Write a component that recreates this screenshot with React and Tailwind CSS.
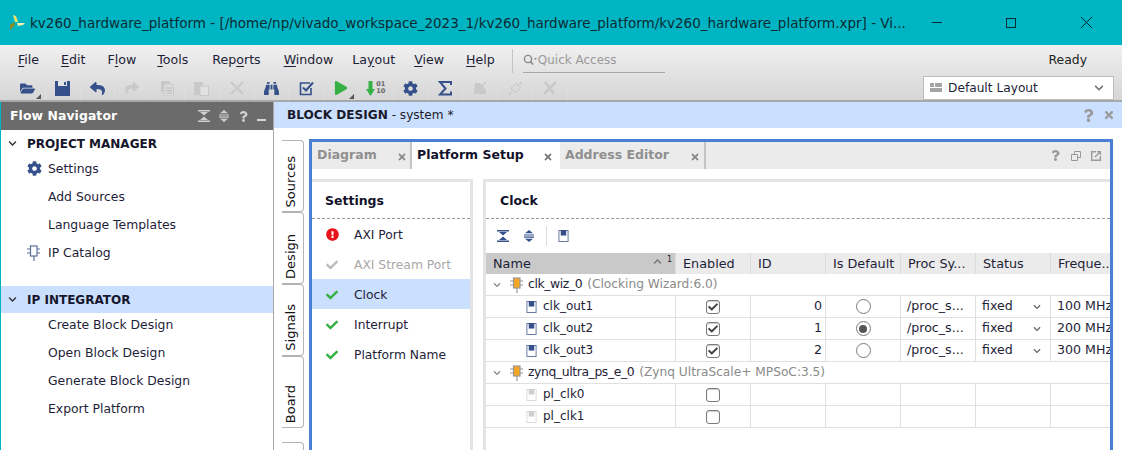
import React from 'react';
import { FaCog, FaCheck, FaExclamationCircle, FaPlay, FaBinoculars, FaFolderOpen, FaReply, FaShare, FaChevronDown, FaTimes, FaQuestion } from 'react-icons/fa';

const NAVY = '#35508a';
const OFF = '#c9c9c9';

function Mn({ pre = '', u, post = '', className = '' }) {
    return <span className={`whitespace-pre ${className}`}>{pre}<span className="underline underline-offset-2">{u}</span>{post}</span>;
}

function Chip({ color = '#5c6f99', core = 'none', className = '' }) {
    return (
        <svg viewBox="0 0 14 16" className={`w-[14px] h-4 ${className}`}>
            <path d="M0 4h13M0 8h13M7 11v5" stroke={color} strokeWidth="1.2" fill="none" />
            <rect x="3.5" y="1" width="6.5" height="10" fill={core === 'none' ? '#fff' : core} stroke={color} strokeWidth="1.2" />
        </svg>
    );
}

function Port({ off }) {
    const c = off ? '#cfcfcf' : NAVY;
    return (
        <svg viewBox="0 0 12 14" className="w-[11px] h-[14px] shrink-0">
            <rect x="1" y="1" width="10" height="12" fill="#fff" stroke={off ? '#d8d8d8' : '#5c6f99'} strokeWidth="1" />
            <rect x="3" y="0.5" width="6" height="6" fill={c} />
        </svg>
    );
}

function CollapseIcon() {
    return (
        <svg viewBox="0 0 12 12" className="w-3 h-3" fill="currentColor">
            <path d="M0 0h12v1.5H0zM0 10.5h12V12H0zM2 2h8L6 5.5zM6 6.5 10 10H2z" />
        </svg>
    );
}

function ExpandIcon() {
    return (
        <svg viewBox="0 0 12 12" className="w-3 h-3" fill="currentColor">
            <path d="M6 0l4 3.2H2zM6 12l-4-3.2h8zM1 4.4h10v1.2H1zM1 6.6h10v1.2H1z" />
        </svg>
    );
}

function ToolCell({ children }) {
    return <div className="w-[34.8px] h-[24px] flex items-center justify-center border-r border-[#dedede] relative">{children}</div>;
}

function Corner() {
    return <span className="absolute right-[4px] bottom-[1px] w-0 h-0 border-l-[5px] border-l-transparent border-b-[5px] border-b-[#555]" />;
}

function Toolbar() {
    return (
        <div className="flex items-center pl-[11px] pt-[1px]">
            <ToolCell><FaFolderOpen size={15} color={NAVY} /><Corner /></ToolCell>
            <ToolCell>
                <svg viewBox="0 0 15 15" className="w-[15px] h-[15px]"><path d="M0 0h15v15H0z" fill={NAVY} /><path d="M3 0h9v5H3z" fill="#e4e4e4" /><path d="M9 1h2v3H9z" fill={NAVY} /></svg>
            </ToolCell>
            <ToolCell><FaReply size={15} color={NAVY} /></ToolCell>
            <ToolCell><FaShare size={14} color={OFF} /></ToolCell>
            <ToolCell>
                <svg viewBox="0 0 13 15" className="w-[13px] h-[15px]"><path d="M0 0h9v11H0z" fill={OFF} /><path d="M3 3h9.5v12H3z" fill="#dcdcdc" stroke={OFF} /><path d="M5 7h6M5 9.5h6M5 12h6" stroke="#bbb" /></svg>
            </ToolCell>
            <ToolCell>
                <svg viewBox="0 0 15 15" className="w-[15px] h-[15px]"><path d="M0 1h9v13H0z" fill={OFF} /><path d="M6 5h8.5v9.5H6z" fill="#e2e2e2" stroke={OFF} /></svg>
            </ToolCell>
            <ToolCell>
                <svg viewBox="0 0 14 14" className="w-[14px] h-[14px]"><path d="M1 1l12 12M13 1 1 13" stroke={OFF} strokeWidth="2.2" /></svg>
            </ToolCell>
            <ToolCell><FaBinoculars size={15} color={NAVY} /></ToolCell>
            <ToolCell>
                <svg viewBox="0 0 15 15" className="w-[15px] h-[15px]" fill="none"><path d="M12 7v6.5H1.5V2H11" stroke={NAVY} strokeWidth="1.6" /><path d="M4 6.5 7 9.5 14 1.5" stroke={NAVY} strokeWidth="2" /></svg>
            </ToolCell>
            <ToolCell><FaPlay size={14} color="#35b044" /><Corner /></ToolCell>
            <ToolCell>
                <div className="flex items-start gap-[1px]">
                    <svg viewBox="0 0 9 15" className="w-[9px] h-[15px]"><path d="M2.5 0h4v8H9L4.5 15 0 8h2.5z" fill="#35b044" /></svg>
                    <span className="text-[6.5px] leading-[7px] font-bold text-[#666]">01<br />10</span>
                </div>
            </ToolCell>
            <ToolCell><FaCog size={15} color={NAVY} /></ToolCell>
            <ToolCell>
                <svg viewBox="0 0 14 15" className="w-[14px] h-[15px]" fill="none"><path d="M13 4V1H2l5.5 6.5L2 13.5h11v-3" stroke={NAVY} strokeWidth="2" /></svg>
            </ToolCell>
            <ToolCell>
                <svg viewBox="0 0 14 14" className="w-[14px] h-[14px]"><path d="M1 13h12V9L7 2 2 2z" fill={OFF} /><path d="M1 13 13 1" stroke={OFF} strokeWidth="1.5" /></svg>
            </ToolCell>
            <ToolCell>
                <svg viewBox="0 0 15 15" className="w-[15px] h-[15px]" fill="none" stroke={OFF}><path d="M3 7.5 8 2.5l4.5 4.5-5 5z" strokeWidth="1.6" strokeDasharray="2 1" /><path d="M1 14l3-3M11 4l3-3" strokeWidth="1.6" /></svg>
            </ToolCell>
            <div className="w-[34.8px] h-[24px] flex items-center justify-center border-r border-[#dedede]">
                <svg viewBox="0 0 14 14" className="w-[14px] h-[14px]"><path d="M1 13 13 1M2 1l9 12" stroke={OFF} strokeWidth="2.6" /></svg>
            </div>
        </div>
    );
}

function NavItem({ icon, className = '', children }) {
    return (
        <div className={`h-7 flex items-center relative pl-[47px] text-[12.4px] text-[#1e1e38] ${className}`}>
            {icon && <span className="absolute left-[26px] top-[6px]">{icon}</span>}
            {children}
        </div>
    );
}

function Navigator() {
    return (
        <div className="w-[274px] shrink-0 border-r border-[#a8a8a8] border-l border-l-[#00b5c3] bg-white flex flex-col">
            <div className="h-7 shrink-0 bg-[#6b6b6b] flex items-center justify-between pl-[9px] pr-[7px] text-white text-[12.4px] font-bold tracking-[0.1px]">
                <span>Flow Navigator</span>
                <div className="flex items-center gap-[8px] text-[#d0d0d0]">
                    <CollapseIcon />
                    <ExpandIcon />
                    <FaQuestion size={11} />
                    <span className="w-[9px] h-[2px] bg-[#d8d8d8] mt-2" />
                </div>
            </div>
            <div className="h-[25px] shrink-0 flex items-center gap-[10px] pl-[7px] pt-[2px] text-[12px] font-bold text-[#16162c]">
                <FaChevronDown size={9} color="#333" />
                <span>PROJECT MANAGER</span>
            </div>
            <NavItem icon={<FaCog size={15} color={NAVY} />}>Settings</NavItem>
            <NavItem>Add Sources</NavItem>
            <NavItem>Language Templates</NavItem>
            <NavItem icon={<Chip />}>IP Catalog</NavItem>
            <div className="h-[27px] shrink-0 mt-[19px] bg-[#cbdfff] flex items-center gap-[10px] pl-[7px] text-[12px] font-bold text-[#16162c]">
                <FaChevronDown size={9} color="#333" />
                <span>IP INTEGRATOR</span>
            </div>
            <NavItem className="-mt-[2px]">Create Block Design</NavItem>
            <NavItem>Open Block Design</NavItem>
            <NavItem>Generate Block Design</NavItem>
            <NavItem>Export Platform</NavItem>
        </div>
    );
}

function SideTab({ children }) {
    return (
        <div className="h-[72px] w-[22px] shrink-0 border border-l-0 border-[#b4b4b4] rounded-r-[4px] bg-white flex items-end justify-center pr-[3px] pb-[4px] text-[13px] text-[#111]">
            <span className="[writing-mode:vertical-rl] rotate-180">{children}</span>
        </div>
    );
}

function Tab({ active, children, w, pr }) {
    return (
        <div className={`h-[27px] flex items-center justify-between pl-[5px] text-[12.5px] font-bold ${active ? 'bg-white text-[#12122a]' : 'bg-[#ebebeb] text-[#8f8f8f] border-r-2 border-r-[#c4c4c4]'} ${w} ${pr}`}>
            <span>{children}</span>
            <FaTimes size={10} color={active ? '#777' : '#888'} className="mt-[2px]" />
        </div>
    );
}

function SetRow({ icon, active, off, children }) {
    return (
        <div className={`h-[30px] flex items-center pl-[14px] pt-[1px] text-[12.3px] ${active ? 'bg-[#cbdfff]' : ''} ${off ? 'text-[#a8a8a8]' : 'text-[#1e1e38]'}`}>
            <span className="w-[28px] flex">{icon}</span>
            <span className="mt-[1px]">{children}</span>
        </div>
    );
}

const gridCols = 'grid grid-cols-[190px_75px_75px_75px_75px_75px_60px]';
const cell = 'h-[22px] border-r border-b border-[#e0e0e0] flex items-center text-[12.6px] text-[#1e1e38] overflow-hidden whitespace-nowrap';

function Check({ on }) {
    return (
        <span className="w-[14px] h-[14px] rounded-[3px] border border-[#7a7a7a] bg-white flex items-center justify-center shadow-[inset_0_1px_1px_#ccc]">
            {on && <FaCheck size={10} color="#444" />}
        </span>
    );
}

function Radio({ on }) {
    return (
        <span className="w-[15px] h-[15px] rounded-full border border-[#7a7a7a] bg-white flex items-center justify-center">
            {on && <span className="w-2 h-2 rounded-full bg-[#555]" />}
        </span>
    );
}

function ClockRow({ name, id, def, freq }) {
    return (
        <div className={gridCols}>
            <div className={`${cell} pl-[40px] gap-[6px]`}><Port /><span className="text-[12px] -mt-[2px]">{name}</span></div>
            <div className={`${cell} justify-center`}><Check on /></div>
            <div className={`${cell} justify-end pr-[3px]`}>{id}</div>
            <div className={`${cell} justify-center`}><Radio on={def} /></div>
            <div className={`${cell} pl-[6px]`}>/proc_s...</div>
            <div className={`${cell} pl-[6px] justify-between pr-[9px]`}><span className="-mt-[1px]">fixed</span><FaChevronDown size={8} color="#666" /></div>
            <div className={`${cell} pl-[6px] border-r-0`}>{freq}</div>
        </div>
    );
}

function PlRow({ name }) {
    return (
        <div className={gridCols}>
            <div className={`${cell} pl-[40px] gap-[6px]`}><Port off /><span className="text-[12px] -mt-[2px]">{name}</span></div>
            <div className={`${cell} justify-center`}><Check /></div>
            <div className={cell} />
            <div className={cell} />
            <div className={cell} />
            <div className={cell} />
            <div className={`${cell} border-r-0`} />
        </div>
    );
}

function GroupRow({ name, desc }) {
    return (
        <div className="h-[22px] border-b border-[#e0e0e0] flex items-center pl-[7px] text-[12.4px] text-[#1e1e38] whitespace-nowrap">
            <FaChevronDown size={8} color="#888" />
            <Chip color="#999" core="#f5a623" className="ml-[9px] mr-[4px]" />
            <span className="tracking-[-0.4px]">{name}</span>
            <span className="text-[#8a8a8a] ml-[5px] text-[12.2px]">{desc}</span>
        </div>
    );
}

function Th({ children, className = 'bg-[#ebebeb]' }) {
    return <div className={`h-[21px] border-r border-[#dcdcdc] flex items-center pl-[7px] text-[12.8px] text-[#1e1e38] overflow-hidden whitespace-nowrap ${className}`}>{children}</div>;
}

export default function App() {
    return (
        <div className="w-[1122px] h-[450px] overflow-hidden bg-white font-['DejaVu_Sans',sans-serif] flex flex-col">
            <div className="h-[45px] shrink-0 bg-[#00b5c3] flex items-center pl-[9px] text-[#0c2b33] text-[13.5px] whitespace-nowrap">
                <svg viewBox="0 0 16 16" className="w-4 h-4 mr-[5px] mt-[1px]">
                    <path d="M4 0l3 1 2 6-3 0z" fill="#f3e36a" />
                    <path d="M8 8l8 0-2 2-5 1z" fill="#f7f0b0" />
                    <path d="M1 15l0-5 4-3 1 3z" fill="#8a8a20" />
                </svg>
                <span className="w-[856px] shrink-0 mt-[1px]">kv260_hardware_platform - [/home/np/vivado_workspace_2023_1/kv260_hardware_platform/kv260_hardware_platform.xpr] - Vi...</span>
                <div className="ml-auto flex items-center text-[#0c2b33]">
                    <span className="w-[10px] h-[1px] bg-[#0c2b33] mr-[64px]" />
                    <span className="w-[10px] h-[10px] border border-[#0c2b33] mr-[65px]" />
                    <svg viewBox="0 0 10 10" className="w-[11px] h-[11px] mr-[30px]"><path d="M0 0l10 10M10 0 0 10" stroke="#0c2b33" strokeWidth="0.9" /></svg>
                </div>
            </div>
            <div className="h-[57px] shrink-0 bg-gradient-to-b from-[#f0f0f0] to-[#d6d6d6] border-b-2 border-[#a8a8a8] relative flex flex-col">
                <div className="h-[30px] shrink-0 flex items-center pl-[18px] text-[12.6px] text-[#1e1e38]">
                    <div className="flex gap-[22px]">
                        <Mn u="F" post="ile" />
                        <Mn u="E" post="dit" />
                        <Mn pre="F" u="l" post="ow" />
                        <Mn u="T" post="ools" className="-ml-[1px]" />
                        <Mn pre="Rep" u="o" post="rts" className="ml-[2px]" />
                        <Mn u="W" post="indow" className="ml-[1px]" />
                        <Mn pre="La" u="y" post="out" className="-ml-[3px]" />
                        <Mn u="V" post="iew" className="-ml-[3px]" />
                        <Mn u="H" post="elp" />
                    </div>
                    <span className="w-[1px] h-6 bg-[#c4c4c4] ml-[17px] mt-[2px]" />
                    <div className="ml-[10px] w-[142px] h-[24px] border-b border-[#a8a8a8] flex items-center gap-[1px] text-[12px] text-[#999] mt-[1px]">
                        <svg viewBox="0 0 14 12" className="w-[14px] h-3" fill="none"><circle cx="5" cy="5" r="3.6" stroke="#888" strokeWidth="1.4" /><path d="M7.5 7.5 10 10.5" stroke="#888" strokeWidth="1.6" /><path d="M11 4h3l-1.5 2z" fill="#888" /></svg>
                        <span>Quick Access</span>
                    </div>
                    <span className="ml-auto mr-[35px] text-[#222] text-[12.4px]">Ready</span>
                </div>
                <Toolbar />
                <div className="absolute left-[923px] top-[31px] w-[191px] h-[24px] bg-white border border-[#bcbcbc] flex items-center pl-[6px] pr-[9px] text-[12.2px] text-[#1e1e38]">
                    <svg viewBox="0 0 12 10" className="w-3 h-[10px] mr-[6px]" fill="#a4a4a4"><path d="M0 0h4v4H0zM5 0h7v4H5zM0 5h12v4H0z" /></svg>
                    <span>Default Layout</span>
                    <FaChevronDown size={10} color="#777" className="ml-auto" />
                </div>
            </div>
            <div className="flex-1 flex min-h-0">
                <Navigator />
                <div className="flex-1 min-w-0 flex flex-col">
                    <div className="h-[26px] shrink-0 bg-[#cbdfff] flex items-center pl-[13px] pr-[7px] text-[12.1px] text-[#1a1a2a]">
                        <span className="font-bold">BLOCK DESIGN</span>
                        <span className="whitespace-pre"> - system *</span>
                        <FaQuestion size={13} color="#9a9a9a" className="ml-auto mr-[8px]" />
                        <FaTimes size={12} color="#9a9a9a" />
                    </div>
                    <div className="flex-1 flex min-h-0 pt-[11px]">
                        <div className="w-[27px] ml-[8px] shrink-0 flex flex-col pt-[1px]">
                            <SideTab>Sources</SideTab>
                            <SideTab>Design</SideTab>
                            <SideTab>Signals</SideTab>
                            <SideTab>Board</SideTab>
                            <div className="h-[60px] w-[22px] shrink-0 mt-[14px] border border-l-0 border-[#b4b4b4] rounded-r-[4px]" />
                        </div>
                        <div className="w-[804px] shrink-0 border-[3px] border-b-0 border-[#4a7fd4] bg-white flex flex-col min-h-0">
                            <div className="h-[27px] shrink-0 bg-[#ebebeb] flex">
                                <Tab w="w-[100px]" pr="pr-[3px]">Diagram</Tab>
                                <Tab active w="w-[148px]" pr="pr-[7px]">Platform Setup</Tab>
                                <Tab w="w-[146px]" pr="pr-[4px]">Address Editor</Tab>
                                <div className="ml-auto flex items-center gap-[10px] pr-[9px]">
                                    <FaQuestion size={11} color="#999" />
                                    <svg viewBox="0 0 10 10" className="w-[10px] h-[10px]" fill="none" stroke="#999"><path d="M3.5 3V.5h6v6H7" /><path d="M.5 3.5h6v6h-6z" /></svg>
                                    <svg viewBox="0 0 10 10" className="w-[10px] h-[10px]" fill="none" stroke="#999" strokeWidth="1.4"><path d="M5 .7H.7v8.6h8.6V5" /><path d="M4 6 9.5.5M6 .5h3.5V4" /></svg>
                                </div>
                            </div>
                            <div className="flex flex-1 min-h-0 pt-[10px]">
                                <div className="w-[161px] shrink-0 border-t-[3px] border-r-[3px] border-[#e4e4e4] flex flex-col">
                                    <div className="h-[37px] shrink-0 border-b border-dashed border-[#999] flex items-center pl-[13px] pt-[2px] text-[12.5px] font-bold text-[#12122a]">Settings</div>
                                    <SetRow icon={<FaExclamationCircle size={13} color="#e8141c" />}>AXI Port</SetRow>
                                    <SetRow off icon={<FaCheck size={12} color="#bcbcbc" />}>AXI Stream Port</SetRow>
                                    <SetRow active icon={<FaCheck size={12} color="#35b044" />}>Clock</SetRow>
                                    <SetRow icon={<FaCheck size={12} color="#35b044" />}>Interrupt</SetRow>
                                    <SetRow icon={<FaCheck size={12} color="#35b044" />}>Platform Name</SetRow>
                                </div>
                                <div className="ml-[10px] flex-1 min-w-0 border-t-[3px] border-l-[3px] border-[#e4e4e4] flex flex-col overflow-hidden">
                                    <div className="h-[37px] shrink-0 border-b border-dashed border-[#999] flex items-center pl-[14px] pt-[2px] text-[12.5px] font-bold text-[#12122a]">Clock</div>
                                    <div className="h-[34px] shrink-0 flex items-center pl-[11px] text-[#35508a]">
                                        <CollapseIcon />
                                        <span className="ml-[14px]"><ExpandIcon /></span>
                                        <span className="w-[1px] h-5 bg-[#dcdcdc] ml-[11px] mr-[11px]" />
                                        <Port />
                                    </div>
                                    <div className={gridCols}>
                                        <Th className="bg-[#c9c9c9] relative">Name
                                            <FaChevronDown size={9} color="#777" className="absolute right-[13px] top-[4px] rotate-180" />
                                            <span className="absolute right-[3px] top-[1px] text-[8px] text-[#222]">1</span>
                                        </Th>
                                        <Th>Enabled</Th>
                                        <Th>ID</Th>
                                        <Th>Is Default</Th>
                                        <Th>Proc Sy...</Th>
                                        <Th>Status</Th>
                                        <Th className="bg-[#ebebeb] border-r-0">Freque...</Th>
                                    </div>
                                    <GroupRow name="clk_wiz_0" desc="(Clocking Wizard:6.0)" />
                                    <ClockRow name="clk_out1" id="0" freq="100 MHz" />
                                    <ClockRow name="clk_out2" id="1" def freq="200 MHz" />
                                    <ClockRow name="clk_out3" id="2" freq="300 MHz" />
                                    <GroupRow name="zynq_ultra_ps_e_0" desc="(Zynq UltraScale+ MPSoC:3.5)" />
                                    <PlRow name="pl_clk0" />
                                    <PlRow name="pl_clk1" />
                                </div>
                            </div>
                        </div>
                    </div>
                </div>
            </div>
        </div>
    );
}
